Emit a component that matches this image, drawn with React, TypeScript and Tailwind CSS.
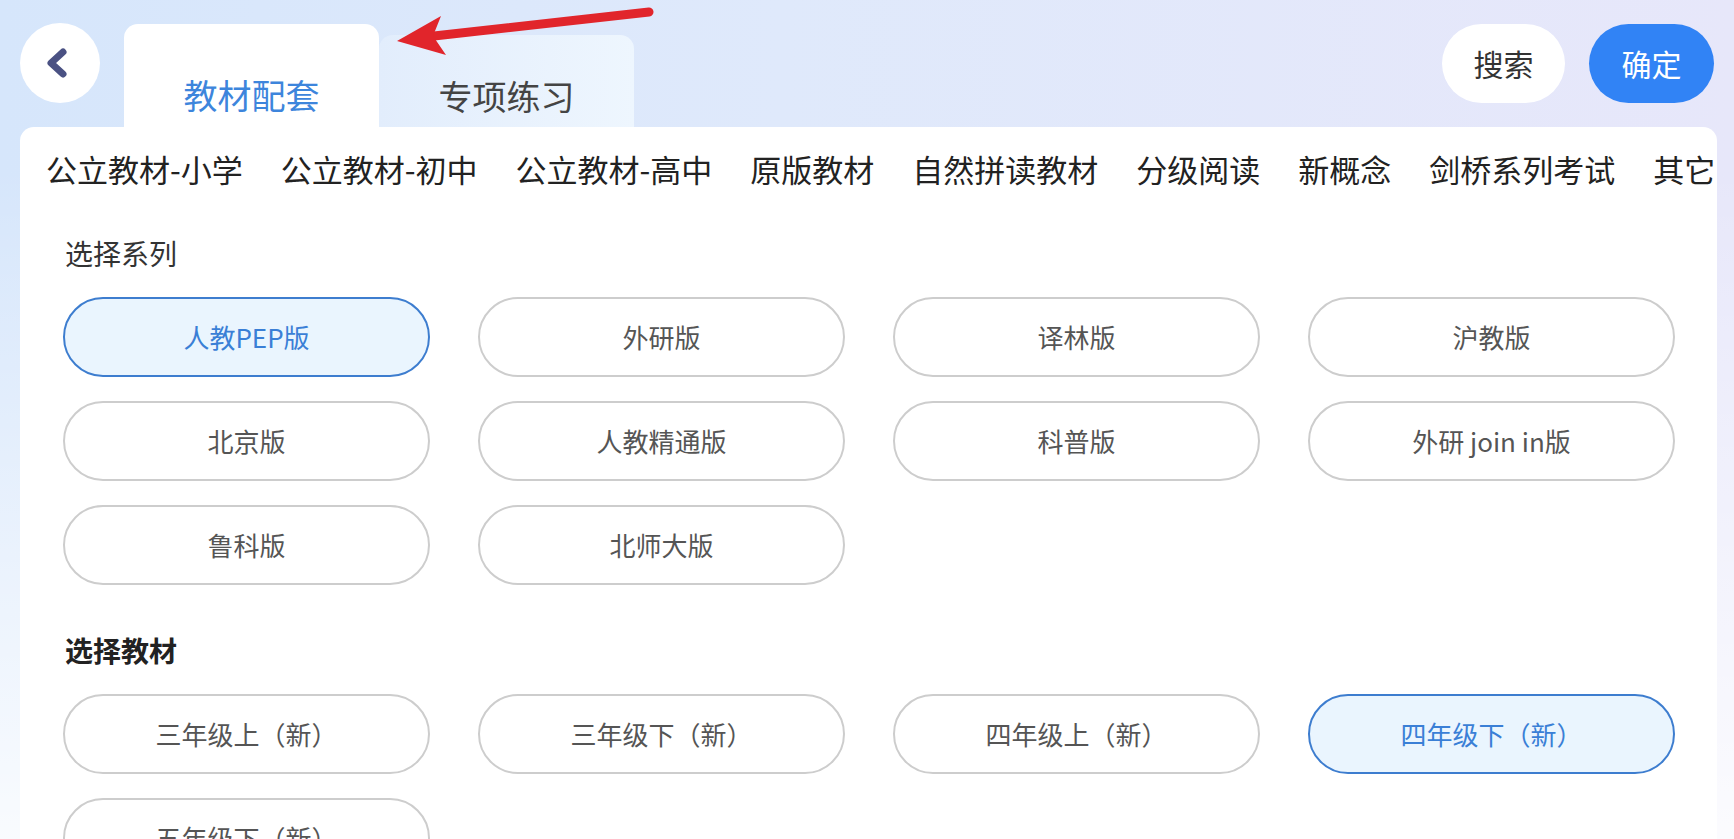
import { useState } from 'react';

const CATEGORIES = [
  '公立教材-小学',
  '公立教材-初中',
  '公立教材-高中',
  '原版教材',
  '自然拼读教材',
  '分级阅读',
  '新概念',
  '剑桥系列考试',
  '其它',
];

const SERIES = ['人教PEP版', '外研版', '译林版', '沪教版', '北京版', '人教精通版', '科普版', '外研 join in版', '鲁科版', '北师大版'];

const BOOKS = ['三年级上（新）', '三年级下（新）', '四年级上（新）', '四年级下（新）', '五年级下（新）'];

// pill used for both series and books
function Pill({ label, active, onClick }: { label: string; active: boolean; onClick: () => void }) {
  return (
    <button
      type="button"
      onClick={onClick}
      className={`h-[80px] rounded-full border-2 text-[26px] leading-none ${
        active ? 'border-[#3d7dcf] bg-[#eaf5fe] text-[#3a7fd6]' : 'border-[#cdcdcd] bg-white text-[#555]'
      }`}
    >
      {label}
    </button>
  );
}

export default function App() {
  const [tab, setTab] = useState(0);
  const [series, setSeries] = useState('人教PEP版');
  const [book, setBook] = useState('四年级下（新）');

  return (
    <div className="relative flex h-[839px] w-full flex-col overflow-hidden font-['Noto_Sans_CJK_SC','Noto_Sans',sans-serif] bg-[linear-gradient(180deg,rgba(255,255,255,0)_0%,rgba(255,255,255,0)_20%,rgba(255,255,255,0.85)_100%),linear-gradient(90deg,#d6e6fb_0%,#dfe9fb_45%,#e7e7fa_100%)]">
      {/* Header */}
      <div className="flex h-[127px] shrink-0 pl-[20px] pr-[20px]">
        <button
          type="button"
          className="mt-[23px] flex h-[80px] w-[80px] shrink-0 items-center justify-center rounded-full bg-white pr-[6px]"
        >
          <svg width="26" height="34" viewBox="0 0 26 34">
            <polyline
              points="19,6 7,17 19,28"
              fill="none"
              stroke="#4a5183"
              strokeWidth="7"
              strokeLinecap="round"
              strokeLinejoin="round"
            />
          </svg>
        </button>

        <div className="ml-[24px] flex items-end">
          <button
            type="button"
            onClick={() => setTab(0)}
            className={`h-[103px] w-[255px] rounded-t-[14px] pt-[39px] text-center text-[34px] leading-[40px] ${
              tab === 0 ? 'bg-white text-[#3d85dc]' : 'bg-[linear-gradient(90deg,#e2edfc,#eef6fe)] text-[#444]'
            }`}
          >
            教材配套
          </button>
          <button
            type="button"
            onClick={() => setTab(1)}
            className={`h-[92px] w-[255px] rounded-t-[14px] pt-[30px] text-center text-[34px] leading-[40px] ${
              tab === 1 ? 'bg-white text-[#3d85dc]' : 'bg-[linear-gradient(90deg,#e2edfc,#eef6fe)] text-[#444]'
            }`}
          >
            专项练习
          </button>
        </div>

        <div className="ml-auto mt-[24px] flex items-start gap-[24px]">
          <button type="button" className="h-[79px] w-[123px] rounded-full bg-white text-[30px] text-[#333]">
            搜索
          </button>
          <button type="button" className="h-[79px] w-[125px] rounded-full bg-[#3183f5] text-[30px] text-white">
            确定
          </button>
        </div>
      </div>

      {/* Card */}
      <div className="ml-[20px] mr-[17px] flex-1 overflow-hidden rounded-t-[14px] bg-white">
        <div className="flex gap-[38px] whitespace-nowrap pl-[26px] pt-[22px] text-[31px] leading-[40px] text-[#222]">
          {CATEGORIES.map((c) => (
            <span key={c}>{c}</span>
          ))}
        </div>

        <div className="px-[43px]">
          <h3 className="mt-[46px] pl-[2px] text-[28px] leading-[36px] text-[#333]">选择系列</h3>
          <div className="mt-[26px] grid grid-cols-[repeat(4,367px)] gap-x-[48px] gap-y-[24px]">
            {SERIES.map((s) => (
              <Pill key={s} label={s} active={series === s} onClick={() => setSeries(s)} />
            ))}
          </div>

          <h3 className="mt-[47px] pl-[2px] text-[28px] font-semibold leading-[36px] text-[#222]">选择教材</h3>
          <div className="mt-[26px] grid grid-cols-[repeat(4,367px)] gap-x-[48px] gap-y-[24px]">
            {BOOKS.map((b) => (
              <Pill key={b} label={b} active={book === b} onClick={() => setBook(b)} />
            ))}
          </div>
        </div>
      </div>

      {/* red annotation arrow */}
      <svg className="pointer-events-none absolute left-0 top-0" width="680" height="70" viewBox="0 0 680 70">
        <line x1="649" y1="12" x2="434" y2="36" stroke="#e1252b" strokeWidth="9" strokeLinecap="round" />
        <polygon points="397,41 441,16 433,36 446,55" fill="#e1252b" />
      </svg>
    </div>
  );
}
